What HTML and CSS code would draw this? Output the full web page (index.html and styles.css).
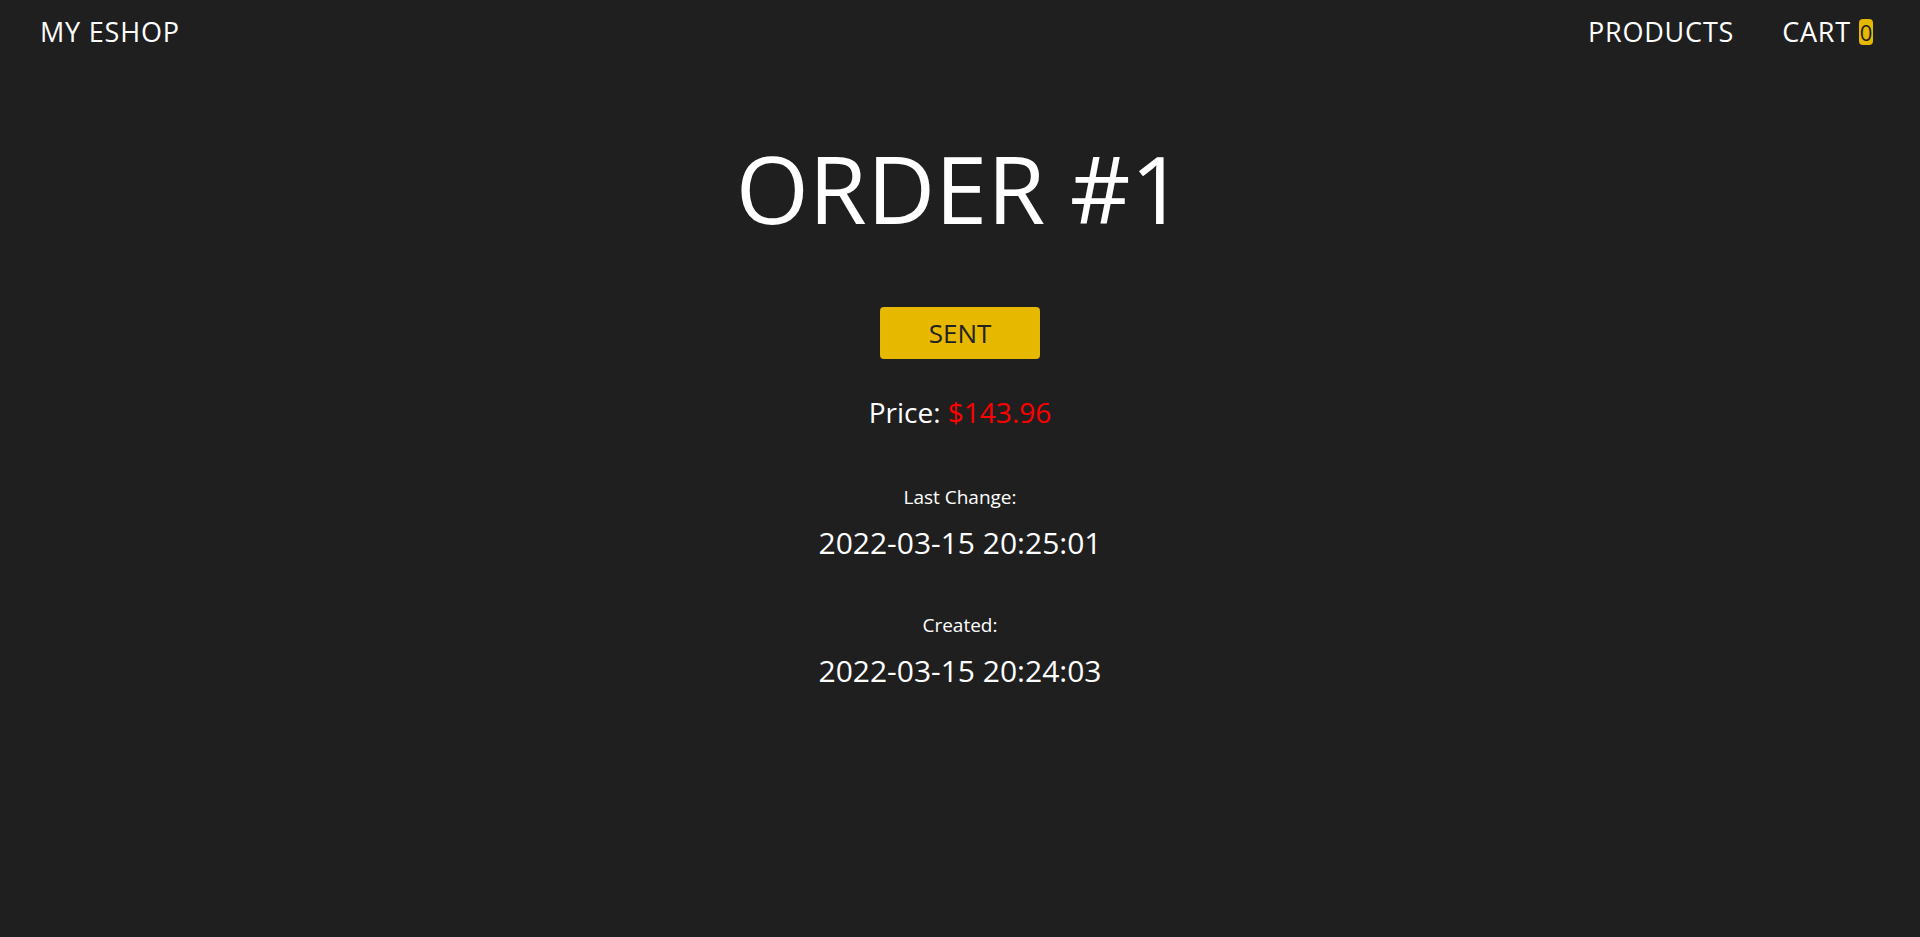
FILE: index.html
```html
<!DOCTYPE html>
<html lang="en">
<head>
<meta charset="utf-8">
<title>My Eshop - Order #1</title>
<link rel="stylesheet" href="styles.css">
</head>
<body>
<header class="navbar">
  <a class="brand" href="#">MY ESHOP</a>
  <nav class="nav-links">
    <a class="nav-link" href="#">PRODUCTS</a>
    <a class="nav-link" href="#">CART<span class="badge">0</span></a>
  </nav>
</header>
<main class="order">
  <h1 class="order-title">ORDER #1</h1>
  <div class="status">SENT</div>
  <p class="price">Price: <span class="price-value">$143.96</span></p>
  <div class="meta">
    <div class="meta-label">Last Change:</div>
    <div class="meta-value">2022-03-15 20:25:01</div>
  </div>
  <div class="meta">
    <div class="meta-label">Created:</div>
    <div class="meta-value">2022-03-15 20:24:03</div>
  </div>
</main>
</body>
</html>
```
FILE: styles.css
```css
* { box-sizing: border-box; }
html, body {
  margin: 0;
  padding: 0;
  background: #1f1f1f;
  color: #ffffff;
  font-family: "Open Sans", "Noto Sans CJK KR", sans-serif;
}
body { min-height: 937px; }
a { color: inherit; text-decoration: none; }

.navbar {
  display: flex;
  justify-content: space-between;
  align-items: center;
  height: 64px;
  padding: 0 47px 0 40px;
}
.brand { font-size: 27px; line-height: 36px; letter-spacing: 0.8px; }
.nav-links { display: flex; gap: 48px; align-items: center; }
.nav-link { font-size: 27px; line-height: 36px; letter-spacing: 0.8px; display: flex; align-items: center; }
.badge {
  display: inline-block;
  background: #e6b800;
  color: #1f1f1f;
  font-size: 22px;
  line-height: 26px;
  height: 26px;
  width: 14px;
  letter-spacing: 0;
  text-align: center;
  border-radius: 4px;
  margin-left: 8px;
}

.order {
  display: flex;
  flex-direction: column;
  align-items: center;
  padding-top: 64px;
}
.order-title {
  margin: 0;
  font-size: 94px;
  font-weight: 400;
  line-height: 120px;
}
.status {
  margin-top: 59px;
  width: 160px;
  height: 52px;
  background: #e6b800;
  color: #222;
  border-radius: 4px;
  font-size: 26px;
  display: flex;
  align-items: center;
  justify-content: center;
}
.price { margin: 35px 0 0; font-size: 28px; line-height: 36px; }
.price-value { color: #ff0000; }
.meta { display: flex; flex-direction: column; align-items: center; margin-top: 49px; }
.price + .meta { margin-top: 54px; }
.meta-label { font-size: 19px; line-height: 26px; }
.meta-value { font-size: 30px; line-height: 40px; margin-top: 13px; }
```
